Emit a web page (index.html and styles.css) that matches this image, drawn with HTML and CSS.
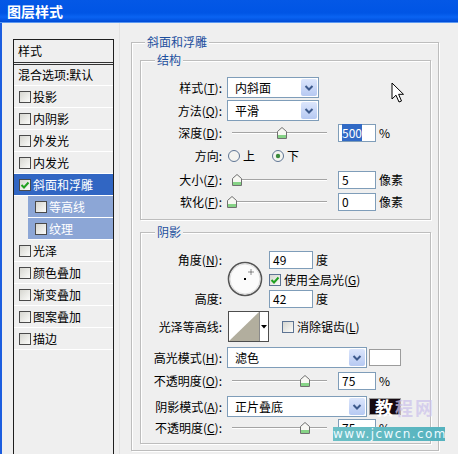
FILE: index.html
```html
<!DOCTYPE html>
<html lang="zh-CN">
<head>
<meta charset="utf-8">
<title>图层样式</title>
<link rel="stylesheet" href="styles.css">
</head>
<body>
<div class="window">
  <div class="titlebar"><span class="title">图层样式</span></div>
  <div class="body">
    <div class="sidebar">
      <div class="list">
        <div class="list-head">样式</div>
        <div class="list-blend">混合选项:默认</div>
        <div class="item"><span class="cb"></span>投影</div>
        <div class="item"><span class="cb"></span>内阴影</div>
        <div class="item"><span class="cb"></span>外发光</div>
        <div class="item"><span class="cb"></span>内发光</div>
        <div class="item selected"><span class="cb"><svg width="10" height="10" viewBox="0 0 10 10"><path d="M1.5 5 L4 7.5 L8.5 2.5" fill="none" stroke="#21a121" stroke-width="2"/></svg></span>斜面和浮雕</div>
        <div class="item sub"><span class="cb"></span>等高线</div>
        <div class="item sub"><span class="cb"></span>纹理</div>
        <div class="item"><span class="cb"></span>光泽</div>
        <div class="item"><span class="cb"></span>颜色叠加</div>
        <div class="item"><span class="cb"></span>渐变叠加</div>
        <div class="item"><span class="cb"></span>图案叠加</div>
        <div class="item"><span class="cb"></span>描边</div>
      </div>
    </div>
    <div class="main">
      <fieldset class="group outer">
        <legend>斜面和浮雕</legend>
        <div class="gbody">
          <fieldset class="group">
            <legend>结构</legend>
            <div class="rows struct">
              <div class="row h21">
                <span class="lbl">样式(<u>T</u>):</span>
                <div class="select w92"><span class="val">内斜面</span><span class="btn"><svg width="10" height="8" viewBox="0 0 10 8"><path d="M1.5 2 L5 5.5 L8.5 2" fill="none" stroke="#3d5a8c" stroke-width="2"/></svg></span></div>
              </div>
              <div class="row h21">
                <span class="lbl">方法(<u>Q</u>):</span>
                <div class="select w92"><span class="val">平滑</span><span class="btn"><svg width="10" height="8" viewBox="0 0 10 8"><path d="M1.5 2 L5 5.5 L8.5 2" fill="none" stroke="#3d5a8c" stroke-width="2"/></svg></span></div>
              </div>
              <div class="row h20">
                <span class="lbl">深度(<u>D</u>):</span>
                <div class="slider"><span class="track"></span><svg class="thumb" style="left:50px" width="10" height="12" viewBox="0 0 10 12"><path d="M0.5 4.5 L5 0.5 L9.5 4.5 V11.5 H0.5 Z" fill="#f7f7f3" stroke="#707070"/><rect x="1" y="8" width="8" height="3" fill="#86d386"/></svg></div>
                <span class="num"><span class="sel">500</span></span><span class="unit">%</span>
              </div>
              <div class="row h22">
                <span class="lbl">方向:</span>
                <svg class="radio" width="12" height="12" viewBox="0 0 12 12"><circle cx="6" cy="6" r="5.5" fill="#f4f4f0" stroke="#5d7493"/></svg><span class="rlabel">上</span>
                <svg class="radio r2" width="12" height="12" viewBox="0 0 12 12"><circle cx="6" cy="6" r="5.5" fill="#f4f4f0" stroke="#5d7493"/><circle cx="6" cy="6" r="2.2" fill="#3b8a3b"/></svg><span class="rlabel">下</span>
              </div>
              <div class="row h21">
                <span class="lbl">大小(<u>Z</u>):</span>
                <div class="slider"><span class="track"></span><svg class="thumb" style="left:5px" width="10" height="12" viewBox="0 0 10 12"><path d="M0.5 4.5 L5 0.5 L9.5 4.5 V11.5 H0.5 Z" fill="#f7f7f3" stroke="#707070"/><rect x="1" y="8" width="8" height="3" fill="#86d386"/></svg></div>
                <span class="num">5</span><span class="unit">像素</span>
              </div>
              <div class="row h20">
                <span class="lbl">软化(<u>F</u>):</span>
                <div class="slider"><span class="track"></span><svg class="thumb" style="left:0px" width="10" height="12" viewBox="0 0 10 12"><path d="M0.5 4.5 L5 0.5 L9.5 4.5 V11.5 H0.5 Z" fill="#f7f7f3" stroke="#707070"/><rect x="1" y="8" width="8" height="3" fill="#86d386"/></svg></div>
                <span class="num">0</span><span class="unit">像素</span>
              </div>
            </div>
          </fieldset>
          <fieldset class="group">
            <legend>阴影</legend>
            <div class="rows shade">
              <div class="angle">
                <span class="lbl a1">角度(<u>N</u>):</span>
                <svg class="dial" width="36" height="36" viewBox="0 0 36 36"><circle cx="18" cy="18" r="16.5" fill="#fbfbfb" stroke="#555" stroke-width="1.6"/><circle cx="18" cy="18" r="15" fill="none" stroke="#dcdcdc"/><rect x="17" y="17" width="2" height="2" fill="#000"/><path d="M24 8.5 V13.5 M21.5 11 H26.5" stroke="#222" stroke-width="1" stroke-dasharray="1 1"/></svg>
                <span class="acell a1c"><span class="num wide">49</span><span class="unit">度</span></span>
                <span class="acell a2c"><span class="cb blue"><svg width="10" height="10" viewBox="0 0 10 10"><path d="M1.5 5 L4 7.5 L8.5 2.5" fill="none" stroke="#21a121" stroke-width="2"/></svg></span><span class="cbtext">使用全局光(<u>G</u>)</span></span>
                <span class="lbl a3">高度:</span>
                <span class="acell a3c"><span class="num wide">42</span><span class="unit">度</span></span>
              </div>
              <div class="row h31 mt3">
                <span class="lbl">光泽等高线:</span>
                <div class="contour"><svg width="30" height="29" viewBox="0 0 30 29"><rect width="30" height="29" fill="#fff"/><path d="M0 29 L30 0 V29 Z" fill="#b2ae9e"/></svg><span class="cdrop"><svg width="6" height="4" viewBox="0 0 6 4"><path d="M0 0 H6 L3 3.5 Z" fill="#000"/></svg></span></div>
                <span class="cb blue gap"></span><span class="cbtext">消除锯齿(<u>L</u>)</span>
              </div>
              <div class="row h21 mt5">
                <span class="lbl">高光模式(<u>H</u>):</span>
                <div class="select w140"><span class="val">滤色</span><span class="btn"><svg width="10" height="8" viewBox="0 0 10 8"><path d="M1.5 2 L5 5.5 L8.5 2" fill="none" stroke="#3d5a8c" stroke-width="2"/></svg></span></div>
                <span class="swatch white"></span>
              </div>
              <div class="row h20 mt3">
                <span class="lbl">不透明度(<u>O</u>):</span>
                <div class="slider"><span class="track"></span><svg class="thumb" style="left:73px" width="10" height="12" viewBox="0 0 10 12"><path d="M0.5 4.5 L5 0.5 L9.5 4.5 V11.5 H0.5 Z" fill="#f7f7f3" stroke="#707070"/><rect x="1" y="8" width="8" height="3" fill="#86d386"/></svg></div>
                <span class="num">75</span><span class="unit">%</span>
              </div>
              <div class="row h21 mt5">
                <span class="lbl">阴影模式(<u>A</u>):</span>
                <div class="select w140"><span class="val">正片叠底</span><span class="btn"><svg width="10" height="8" viewBox="0 0 10 8"><path d="M1.5 2 L5 5.5 L8.5 2" fill="none" stroke="#3d5a8c" stroke-width="2"/></svg></span></div>
                <span class="swatch black"></span>
              </div>
              <div class="row h19 mt1">
                <span class="lbl">不透明度(<u>C</u>):</span>
                <div class="slider"><span class="track"></span><svg class="thumb" style="left:73px" width="10" height="12" viewBox="0 0 10 12"><path d="M0.5 4.5 L5 0.5 L9.5 4.5 V11.5 H0.5 Z" fill="#f7f7f3" stroke="#707070"/><rect x="1" y="8" width="8" height="3" fill="#86d386"/></svg></div>
                <span class="num">75</span><span class="unit">%</span>
              </div>
            </div>
          </fieldset>
        </div>
      </fieldset>
    </div>
  </div>
  <svg class="cursor" width="14" height="22" viewBox="0 0 14 22"><path d="M1 1 V17 L5 13.2 L8 20 L10.5 19 L7.6 12.3 H12.5 Z" fill="#fff" stroke="#000" stroke-width="1" stroke-linejoin="round"/></svg>
  <div class="watermark">
    <span class="wm-cn"><span class="wm-first">教</span>程网</span>
    <span class="wm-url">www.jcwcn.com</span>
  </div>
</div>
</body>
</html>
```
FILE: styles.css
```css
* { box-sizing: border-box; }
html, body { margin: 0; padding: 0; }
body {
  width: 458px;
  height: 454px;
  overflow: hidden;
  background: #efefef;
  font-family: "Noto Sans CJK SC", "Noto Sans CJK JP", sans-serif;
  font-size: 12px;
  line-height: 14px;
  color: #000;
}
u { text-decoration: underline; text-underline-offset: 1px; }

.window {
  position: relative;
  width: 458px;
  height: 454px;
  display: flex;
  flex-direction: column;
  overflow: hidden;
}

/* title bar */
.titlebar {
  flex: none;
  height: 23px;
  padding-left: 7px;
  display: flex;
  align-items: center;
  background: linear-gradient(#0458e6 0, #0055e5 13px, #0a63f2 17px, #0356e4 20px, #004ad4 22px);
  border-bottom: 1px solid #5b98f2;
}
.title {
  color: #fff;
  font-weight: 700;
  font-size: 14px;
  line-height: 16px;
}

.body {
  flex: 1;
  min-height: 0;
  display: flex;
  border-left: 2px solid #1b5ddf;
}

/* style list */
.sidebar {
  flex: none;
  width: 118px;
  padding: 16px 0 0 11px;
  border-right: 1px solid #e2e2e2;
}
.list {
  width: 101px;
  height: 440px;
  border: 1px solid #1e1e1e;
  background: #efefef;
}
.list-head {
  height: 23px;
  padding-left: 4px;
  line-height: 22px;
  border-bottom: 1px solid #333;
}
.list-blend {
  height: 22px;
  margin-top: 1px;
  padding-left: 4px;
  line-height: 20px;
  border-top: 1px solid #333;
  border-bottom: 1px solid #fff;
  white-space: nowrap;
}
.item {
  height: 22px;
  display: flex;
  align-items: center;
  padding-left: 5px;
  border-bottom: 1px solid #fff;
  white-space: nowrap;
}
.item.selected { background: #3166c3; color: #fff; }
.item.sub {
  margin-left: 14px;
  padding-left: 7px;
  background: #8ca6d6;
  color: #fff;
}
.cb {
  flex: none;
  width: 12px;
  height: 12px;
  margin-right: 2px;
  border: 1px solid #4a4a4a;
  background: linear-gradient(135deg, #d6d6d0, #fbfbf9);
  display: flex;
  align-items: center;
  justify-content: center;
}
.cb.blue { border-color: #5d7493; margin-right: 0; }
.cb.gap { margin-left: 13px; }
.cbtext { margin-left: 3px; }

/* right side */
.main {
  flex: none;
  padding: 12px 0 0 11px;
}
.group {
  margin: 0;
  padding: 0;
  min-width: 0;
  border: 1px solid #bdbdbd;
  box-shadow: inset 1px 1px 0 #fff, 1px 1px 0 #fff;
}
.group legend {
  margin-left: 14px;
  padding: 0 2px;
  line-height: 14px;
  color: #1d4f9e;
  background: #efefef;
}
.outer { width: 308px; }
.outer > legend { margin-left: 13px; }
.gbody { padding: 4px 7px 6px 8px; }
.group + .group { margin-top: 5px; }

.rows { display: flex; flex-direction: column; }
.struct { padding: 10px 0 7px; gap: 2px; }
.shade { padding: 11px 0 6px; }

.row {
  display: flex;
  align-items: center;
  white-space: nowrap;
}
.h19 { height: 19px; }
.h20 { height: 20px; }
.h21 { height: 21px; }
.h22 { height: 22px; }
.h31 { height: 31px; }
.mt1 { margin-top: 1px; }
.mt3 { margin-top: 3px; }
.mt5 { margin-top: 5px; }

.lbl {
  flex: none;
  width: 86px;
  padding-right: 5px;
  text-align: right;
  white-space: nowrap;
}

/* dropdowns */
.select {
  flex: none;
  height: 21px;
  display: flex;
  align-items: stretch;
  border: 1px solid #7f9db9;
  background: #fff;
}
.select .val {
  flex: 1;
  padding-left: 7px;
  line-height: 19px;
}
.select .btn {
  flex: none;
  width: 16px;
  margin: 1px;
  border-radius: 2px;
  background: linear-gradient(#dce6fc, #b6c9f2);
  display: flex;
  align-items: center;
  justify-content: center;
}
.w92 { width: 92px; }
.w140 { width: 140px; }

/* sliders */
.slider {
  flex: none;
  position: relative;
  width: 100px;
  height: 14px;
  display: flex;
  align-items: center;
}
.track {
  margin-left: 5px;
  width: 95px;
  height: 2px;
  border-top: 1px solid #a4a4a4;
  border-bottom: 1px solid #fff;
}
.thumb { position: absolute; top: 1px; }

/* number fields */
.num {
  flex: none;
  width: 38px;
  height: 18px;
  margin-left: 11px;
  padding-left: 3px;
  border: 1px solid #7f9db9;
  background: #fff;
  line-height: 16px;
}
.num.wide { width: 44px; margin-left: 0; }
.sel { background: #316ac5; color: #fff; }
.unit { margin-left: 3px; }

/* radios */
.radio { flex: none; margin-left: 1px; }
.radio.r2 { margin-left: 17px; }
.rlabel { margin-left: 3px; }

/* angle block */
.angle {
  display: grid;
  grid-template-columns: 86px 42px auto;
  grid-template-rows: 20px 19px 19px;
  align-items: center;
}
.a1 { grid-column: 1; grid-row: 1; }
.a3 { grid-column: 1; grid-row: 3; }
.dial { grid-column: 2; grid-row: 1 / 4; margin-left: 0; }
.acell { display: flex; align-items: center; grid-column: 3; }
.a1c { grid-row: 1; }
.a2c { grid-row: 2; }
.a3c { grid-row: 3; }

/* contour picker */
.contour {
  flex: none;
  margin-left: 1px;
  display: flex;
  border: 1px solid #4d4d4d;
  background: #fff;
}
.contour svg { display: block; }
.cdrop {
  width: 9px;
  border-left: 1px solid #8a8a8a;
  display: flex;
  align-items: center;
  justify-content: center;
}

/* color swatches */
.swatch {
  flex: none;
  width: 32px;
  height: 17px;
  margin-left: 2px;
  border: 1px solid #9c9c9c;
}
.swatch.white { background: #fff; }
.swatch.black { background: #160a12; }

/* overlays */
.cursor {
  position: absolute;
  left: 391px;
  top: 82px;
}
.watermark {
  position: absolute;
  left: 333px;
  top: 396px;
  width: 112px;
  height: 45px;
  pointer-events: none;
}
.wm-cn {
  position: absolute;
  left: 42px;
  top: 0;
  font-size: 18px;
  line-height: 22px;
  font-weight: 700;
  color: rgba(205, 195, 235, 0.75);
  letter-spacing: 2px;
}
.wm-first { color: #fff; }
.wm-url {
  position: absolute;
  left: 0;
  bottom: 0;
  width: 112px;
  height: 14px;
  background: linear-gradient(90deg, #6cc0c6, #55b2be);
  color: #eefaff;
  font-family: "DejaVu Sans", sans-serif;
  font-size: 12px;
  line-height: 14px;
  letter-spacing: 1.4px;
  text-align: center;
  white-space: nowrap;
}
```
